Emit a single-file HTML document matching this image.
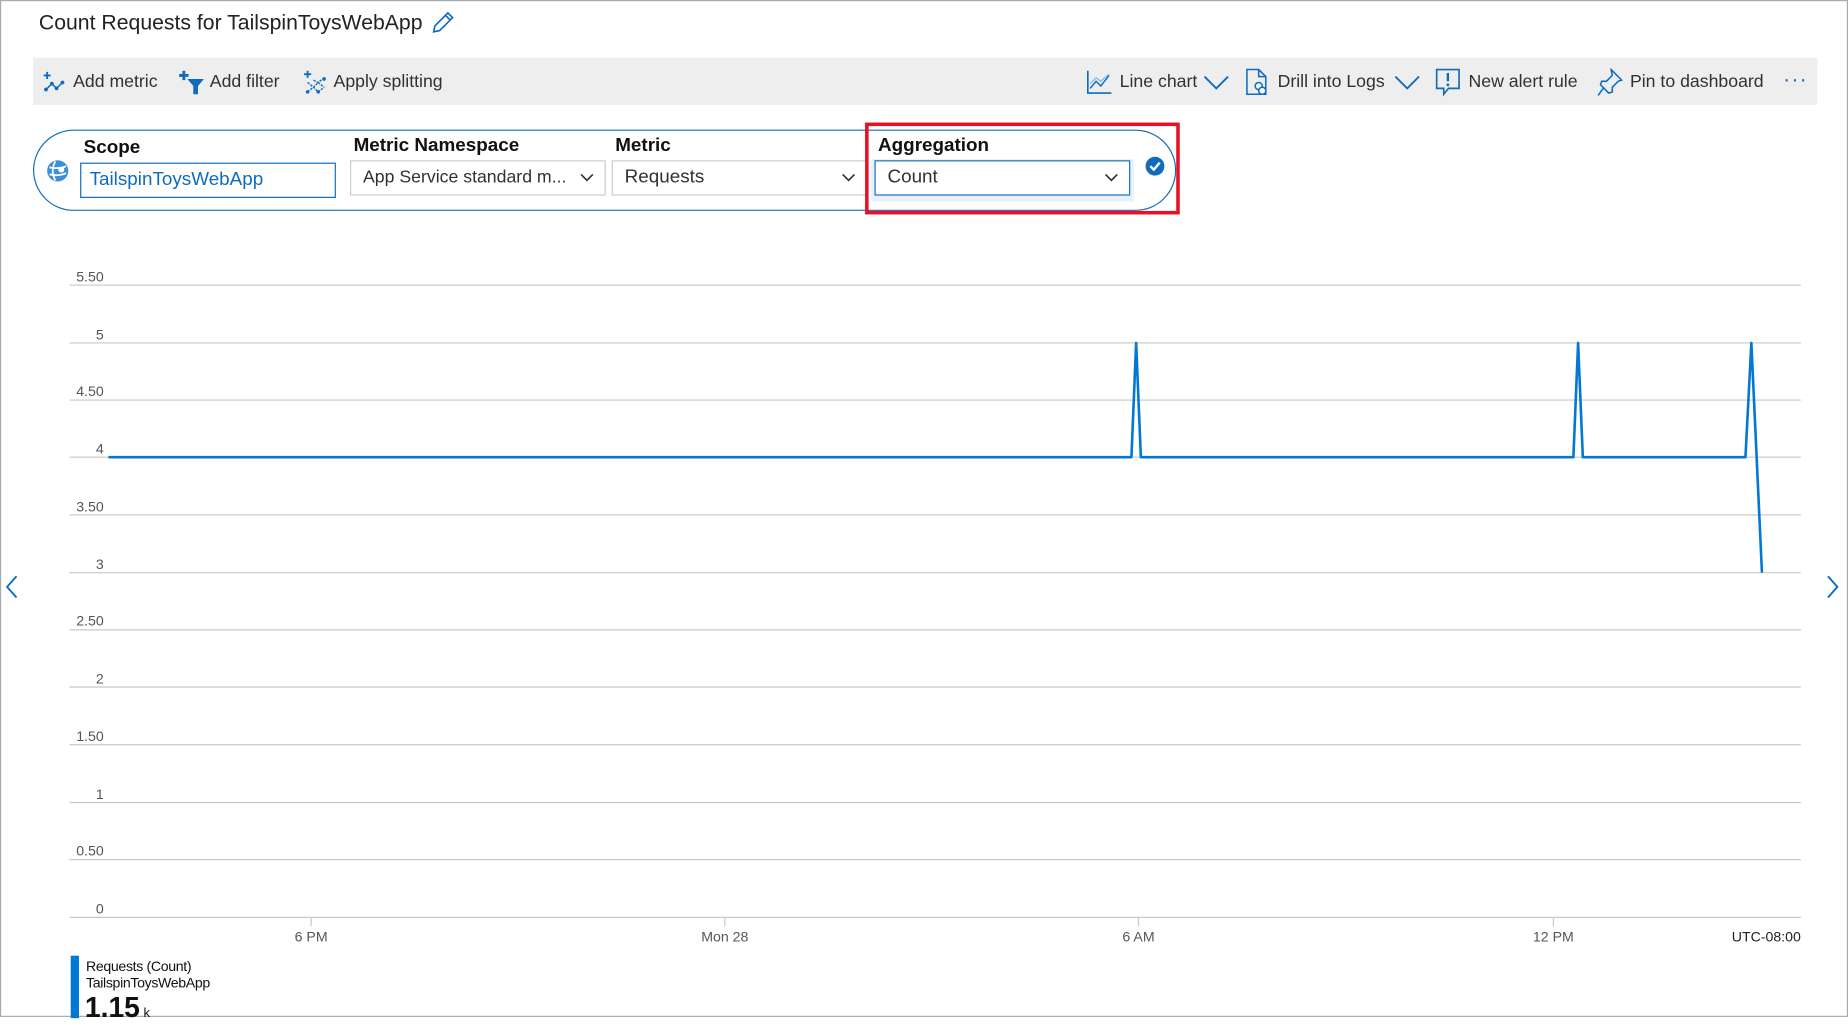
<!DOCTYPE html>
<html><head><meta charset="utf-8"><style>
html,body{margin:0;padding:0;width:1848px;height:1017px;overflow:hidden;background:#fff}
#w{position:absolute;left:0;top:0;width:1568px;height:863px;transform:scale(1.17857,1.1784);transform-origin:0 0;font-family:"Liberation Sans",sans-serif;color:#222;box-sizing:border-box;border:1px solid #aaa;}
.a{position:absolute;white-space:nowrap}
.tb{font-size:15px;color:#323130}
.lbl{font-size:16px;font-weight:600;color:#111}
.box{position:absolute;height:30px;border:1px solid #ccc;box-sizing:border-box;font-size:16px;line-height:28px;padding-left:10px;color:#323130}
</style></head><body><div id="w">
<div class="a" style="left:32px;top:8px;font-size:18px;color:#222">Count Requests for TailspinToysWebApp</div>
<svg class="a" style="left:364px;top:7px" width="22" height="22" viewBox="0 0 22 22"><path d="M3 19 L4 14 L15 3 L19 7 L8 18 Z M13 5 L17 9 M3 19 L7 18" fill="none" stroke="#0f6cbd" stroke-width="1.4"/></svg>
<div class="a" style="left:27px;top:48px;width:1514px;height:40px;background:#eeeeee"></div>
<svg class="a" style="left:35px;top:59px" width="20" height="20" viewBox="0 0 20 20"><path d="M4 1v6M1 4h6" stroke="#0f6cbd" stroke-width="1.6"/><path d="M3 16l5-5 4 4 5-5" fill="none" stroke="#0f6cbd" stroke-width="1.3"/><circle cx="3" cy="16" r="1.6" fill="#0f6cbd"/><circle cx="8" cy="11" r="1.6" fill="#0f6cbd"/><circle cx="12" cy="15" r="1.6" fill="#0f6cbd"/><circle cx="17" cy="10" r="1.6" fill="#0f6cbd"/></svg>
<div class="a tb" style="left:61px;top:60px">Add metric</div>
<svg class="a" style="left:150px;top:57px" width="24" height="24" viewBox="0 0 24 24"><path d="M5 2v8M1 6h8" stroke="#0f6cbd" stroke-width="2.4"/><path d="M8 9h14l-5 6v7h-4v-7z" fill="#0f6cbd"/></svg>
<div class="a tb" style="left:177px;top:60px">Add filter</div>
<svg class="a" style="left:256px;top:58px" width="22" height="22" viewBox="0 0 22 22"><path d="M4 1v6M1 4h6" stroke="#0f6cbd" stroke-width="1.6"/><path d="M4 11l5 4 4-4 5 4M4 19l5-4 4 4 5-4M9 9l4 2 5-4" fill="none" stroke="#0f6cbd" stroke-width="1.2" stroke-dasharray="2 1"/><circle cx="4" cy="19" r="1.5" fill="#0f6cbd"/><circle cx="13" cy="19" r="1.5" fill="#0f6cbd"/><circle cx="18" cy="8" r="1.5" fill="#0f6cbd"/></svg>
<div class="a tb" style="left:282px;top:60px">Apply splitting</div>
<svg class="a" style="left:921px;top:58px" width="22" height="22" viewBox="0 0 22 22"><path d="M1 1v19h20" fill="none" stroke="#0f6cbd" stroke-width="1.4"/><path d="M3 16l5-6 4 4 7-9" fill="none" stroke="#0f6cbd" stroke-width="1.2"/><path d="M3 12l5-5 4 3 7-6" fill="none" stroke="#7ab6e8" stroke-width="1"/></svg>
<div class="a tb" style="left:949px;top:60px">Line chart</div>
<svg class="a" style="left:1020px;top:62px" width="22" height="14" viewBox="0 0 22 14"><path d="M1 2l10 10 10-10" fill="none" stroke="#0f6cbd" stroke-width="1.6"/></svg>
<svg class="a" style="left:1055px;top:57px" width="22" height="24" viewBox="0 0 22 24"><path d="M2 1h10l6 6v15H2z M12 1v6h6" fill="none" stroke="#0f6cbd" stroke-width="1.3"/><circle cx="12" cy="15" r="3" fill="#fff" stroke="#0f6cbd" stroke-width="1.3"/><circle cx="15" cy="19" r="3" fill="#fff" stroke="#0f6cbd" stroke-width="1.3"/></svg>
<div class="a tb" style="left:1083px;top:60px">Drill into Logs</div>
<svg class="a" style="left:1182px;top:62px" width="22" height="14" viewBox="0 0 22 14"><path d="M1 2l10 10 10-10" fill="none" stroke="#0f6cbd" stroke-width="1.6"/></svg>
<svg class="a" style="left:1217px;top:57px" width="22" height="24" viewBox="0 0 22 24"><path d="M1 1h19v16H11l-4 5v-5H1z" fill="none" stroke="#0f6cbd" stroke-width="1.4"/><path d="M10.5 4v7" stroke="#0f6cbd" stroke-width="2"/><circle cx="10.5" cy="14" r="1.2" fill="#0f6cbd"/></svg>
<div class="a tb" style="left:1245px;top:60px">New alert rule</div>
<svg class="a" style="left:1354px;top:57px" width="22" height="24" viewBox="0 0 22 24"><path d="M12 1l9 9-3 1-5 5 0 4-3 1-7-7 1-3 4 0 5-5z M6 16l-5 7" fill="none" stroke="#0f6cbd" stroke-width="1.3"/></svg>
<div class="a tb" style="left:1382px;top:60px">Pin to dashboard</div>
<div class="a" style="left:1512px;top:56px;font-size:18px;color:#0f6cbd;letter-spacing:1px">···</div>

<div class="a" style="left:27px;top:109px;width:970px;height:69px;border:1px solid #0f6cbd;border-radius:35px;box-sizing:border-box"></div>
<svg class="a" style="left:38px;top:134px" width="20" height="20" viewBox="0 0 20 20"><circle cx="10" cy="10" r="9" fill="#3b8fd9"/><path d="M3 7c4 1 10 1 14-1M3 13c4 1 10 1 14-1M8 2c-3 5-3 11 0 16" fill="none" stroke="#fff" stroke-width="1.5"/><circle cx="13" cy="9" r="2.5" fill="#fff"/></svg>
<div class="a lbl" style="left:70px;top:116px">Scope</div>
<div class="box" style="left:67px;top:137px;width:217px;border-color:#0f6cbd;color:#0f6cbd;font-size:16px;padding-left:7px">TailspinToysWebApp</div>
<div class="a lbl" style="left:299px;top:114px">Metric Namespace</div>
<div class="box" style="left:296px;top:135px;width:217px;font-size:15px">App Service standard m...</div>
<svg class="a" style="left:491px;top:145px" width="12" height="10" viewBox="0 0 12 10"><path d="M1 2l5 5 5-5" fill="none" stroke="#333" stroke-width="1.4"/></svg>
<div class="a lbl" style="left:521px;top:114px">Metric</div>
<div class="box" style="left:518px;top:135px;width:217px">Requests</div>
<svg class="a" style="left:713px;top:145px" width="12" height="10" viewBox="0 0 12 10"><path d="M1 2l5 5 5-5" fill="none" stroke="#333" stroke-width="1.4"/></svg>
<div class="a" style="left:738px;top:134px;width:223px;height:36px;background:#e8f2fc"></div>
<div class="a lbl" style="left:744px;top:114px">Aggregation</div>
<div class="box" style="left:741px;top:135px;width:217px;border-color:#0f6cbd;background:#fff">Count</div>
<svg class="a" style="left:936px;top:145px" width="12" height="10" viewBox="0 0 12 10"><path d="M1 2l5 5 5-5" fill="none" stroke="#333" stroke-width="1.4"/></svg>
<svg class="a" style="left:970px;top:131px" width="18" height="18" viewBox="0 0 18 18"><circle cx="9" cy="9" r="8" fill="#0f6cbd"/><path d="M5 9l3 3 5-6" fill="none" stroke="#fff" stroke-width="2"/></svg>
<div class="a" style="left:733px;top:103px;width:267px;height:78px;border:3px solid #e81123;box-sizing:border-box"></div>

<svg class="a" style="left:0;top:0" width="1568" height="863" viewBox="0 0 1568 863">
<g stroke="#c8c8c8" stroke-width="1">
<line x1="58" y1="241" x2="1527" y2="241"/><line x1="58" y1="290" x2="1527" y2="290"/><line x1="58" y1="338.5" x2="1527" y2="338.5"/><line x1="58" y1="387" x2="1527" y2="387"/><line x1="58" y1="436" x2="1527" y2="436"/><line x1="58" y1="485" x2="1527" y2="485"/><line x1="58" y1="533.5" x2="1527" y2="533.5"/><line x1="58" y1="582" x2="1527" y2="582"/><line x1="58" y1="631" x2="1527" y2="631"/><line x1="58" y1="680" x2="1527" y2="680"/><line x1="58" y1="728.5" x2="1527" y2="728.5"/><line x1="58" y1="777.5" x2="1527" y2="777.5"/>
<line x1="263" y1="778" x2="263" y2="785"/><line x1="614" y1="778" x2="614" y2="785"/><line x1="965" y1="778" x2="965" y2="785"/><line x1="1317" y1="778" x2="1317" y2="785"/>
</g>
<g font-family="Liberation Sans,sans-serif" font-size="12" fill="#555" text-anchor="end">
<text x="87" y="238">5.50</text><text x="87" y="287">5</text><text x="87" y="335">4.50</text><text x="87" y="384">4</text><text x="87" y="433">3.50</text><text x="87" y="482">3</text><text x="87" y="530">2.50</text><text x="87" y="579">2</text><text x="87" y="628">1.50</text><text x="87" y="677">1</text><text x="87" y="725">0.50</text><text x="87" y="774">0</text>
</g>
<g font-family="Liberation Sans,sans-serif" font-size="12" fill="#555" text-anchor="middle">
<text x="263" y="798">6 PM</text><text x="614" y="798">Mon 28</text><text x="965" y="798">6 AM</text><text x="1317" y="798">12 PM</text><text x="1527" y="798" text-anchor="end" fill="#222">UTC-08:00</text>
</g>
<polyline points="91,387 959,387 963,290 967,387 1334,387 1338,290 1342,387 1480,387 1485,290 1494,485" fill="none" stroke="#0078d4" stroke-width="2.2" stroke-linejoin="round"/>
<path d="M13 488l-8 9 8 9" fill="none" stroke="#0f6cbd" stroke-width="1.6"/>
<path d="M1550 488l8 9-8 9" fill="none" stroke="#0f6cbd" stroke-width="1.6"/>
</svg>
<div class="a" style="left:59px;top:810px;width:7px;height:53px;background:#0078d4"></div>
<div class="a" style="left:72px;top:812px;font-size:12px;color:#111;letter-spacing:-0.3px">Requests (Count)</div>
<div class="a" style="left:72px;top:826px;font-size:12px;color:#111;letter-spacing:-0.3px">TailspinToysWebApp</div>
<div class="a" style="left:71px;top:841px;font-size:24px;font-weight:600;color:#111">1.15<span style="font-size:11px;font-weight:normal"> k</span></div>
</div></body></html>
